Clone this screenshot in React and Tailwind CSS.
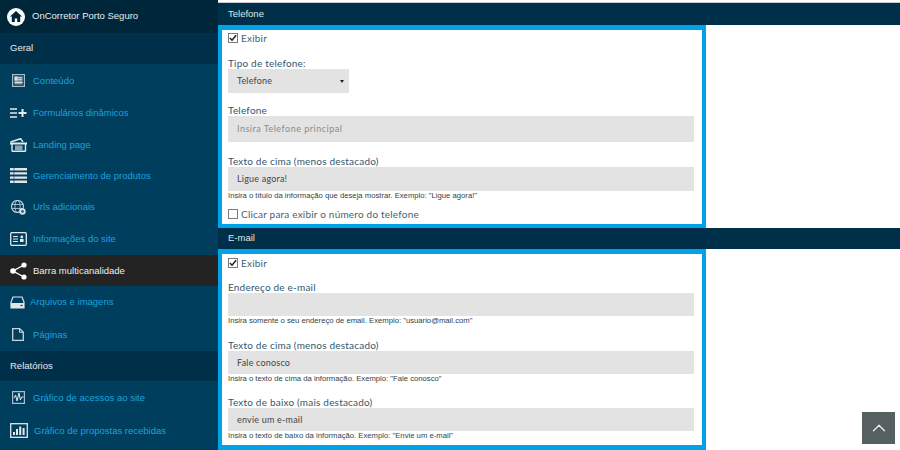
import { ChevronUp } from 'lucide-react';

const sans = "font-['Liberation_Sans',Arial,sans-serif]";

// Sidebar icons, drawn to match the panel's pale line style
function IconContent() {
  return (
    <svg width="13" height="13" viewBox="0 0 13 13" fill="none">
      <rect x="0.6" y="0.6" width="11.8" height="11.8" stroke="#a9bcc7" strokeWidth="1.2" />
      <rect x="2.5" y="2.5" width="8" height="8" fill="#7f9aaa" />
      <rect x="2.5" y="2.5" width="3" height="4" fill="#dbe3e8" />
      <path d="M6 3.5h4.5M6 5.5h4.5" stroke="#dbe3e8" strokeWidth="0.7" />
      <path d="M2.5 8.5h8" stroke="#dbe3e8" />
    </svg>
  );
}

function IconFormPlus() {
  return (
    <svg width="17" height="10" viewBox="0 0 17 10" fill="none">
      <path d="M0 1h7M0 5h7M0 9h7" stroke="#e3e9ec" strokeWidth="1.7" />
      <path d="M12.5 1v8M8.5 5h8" stroke="#e3e9ec" strokeWidth="2" />
    </svg>
  );
}

function IconLanding() {
  return (
    <svg width="17" height="14" viewBox="0 0 17 14" fill="none">
      <path d="M0.5 4l10-3.3 2.5 3" stroke="#e3e9ec" strokeWidth="1.5" />
      <path d="M0 4.5h17v2H0z" fill="#e3e9ec" />
      <path d="M2 6v7.4M15.5 6v7.4M2 13.3h13.5" stroke="#e3e9ec" strokeWidth="1.4" />
      <rect x="5" y="7.5" width="7.5" height="5" fill="#8ea5b2" />
    </svg>
  );
}

function IconList() {
  return (
    <svg width="17" height="15" viewBox="0 0 17 15">
      <path d="M0 0h17v2.4H0zM0 4.2h17v2.4H0zM0 8.4h17v2.4H0zM0 12.6h17V15H0z" fill="#dfe6ea" />
      <path d="M4 0v15" stroke="#003e5e" strokeWidth="0.6" />
    </svg>
  );
}

function IconGlobe() {
  return (
    <svg width="15" height="15" viewBox="0 0 15 15" fill="none">
      <circle cx="6.5" cy="6.5" r="6" stroke="#c3d0d8" strokeWidth="1.1" />
      <ellipse cx="6.5" cy="6.5" rx="2.6" ry="6" stroke="#c3d0d8" strokeWidth="0.8" />
      <path d="M0.5 4.5h12M0.5 8.5h12" stroke="#c3d0d8" strokeWidth="0.8" />
      <circle cx="11.5" cy="11.5" r="3.2" fill="#d7e0e5" />
      <circle cx="11.5" cy="11.5" r="1.4" fill="#1d6f99" />
    </svg>
  );
}

function IconInfoCard() {
  return (
    <svg width="17" height="14" viewBox="0 0 17 14" fill="none">
      <rect x="0.7" y="0.7" width="15.6" height="12.6" rx="1" stroke="#e3e9ec" strokeWidth="1.3" />
      <path d="M3 4.5h5M3 7h5M3 9.5h5" stroke="#e3e9ec" />
      <circle cx="11.8" cy="5" r="1.4" fill="#e3e9ec" />
      <path d="M10 7h3.6v3H10z" fill="#e3e9ec" />
    </svg>
  );
}

function IconShare() {
  return (
    <svg width="17" height="18" viewBox="0 0 17 18" fill="none">
      <path d="M14 3L3 9l11 6" stroke="#fff" strokeWidth="1.4" />
      <circle cx="14" cy="3" r="2.6" fill="#fff" />
      <circle cx="3" cy="9" r="2.8" fill="#fff" />
      <circle cx="14" cy="15" r="2.6" fill="#fff" />
    </svg>
  );
}

function IconDrive() {
  return (
    <svg width="15" height="13" viewBox="0 0 15 13" fill="none">
      <path d="M3 1h9l2 5v6H1V6z" stroke="#dfe6ea" strokeWidth="1.2" />
      <path d="M1 7h13v5H1z" fill="#dfe6ea" />
      <path d="M10.5 9.5h2" stroke="#003e5e" strokeWidth="1.2" />
    </svg>
  );
}

function IconPage() {
  return (
    <svg width="12" height="13" viewBox="0 0 12 13" fill="none">
      <path d="M0.7 0.7h7L11.3 4.2v8.1H0.7z" stroke="#c9d5dc" strokeWidth="1.3" />
      <path d="M7.5 0.7v3.6h3.8" stroke="#c9d5dc" />
    </svg>
  );
}

function IconPulse() {
  return (
    <svg width="13" height="13" viewBox="0 0 13 13" fill="none">
      <rect x="0.6" y="0.6" width="11.8" height="11.8" stroke="#aebfc9" strokeWidth="1.2" />
      <path d="M2 7l1.6-3 1.4 6 2-8 1.4 7 1.2-3H11.5" stroke="#e3e9ec" />
    </svg>
  );
}

function IconBars() {
  return (
    <svg width="18" height="15" viewBox="0 0 18 15" fill="none">
      <rect x="0.7" y="0.7" width="16.6" height="13.6" stroke="#dfe6ea" strokeWidth="1.3" />
      <path d="M3 9h2v3H3zM6 6h2v6H6zM9.2 3.5h2V12h-2zM12.6 5h2v7h-2z" fill="#e3e9ec" />
    </svg>
  );
}

function SectionLabel({ h, children }) {
  return <div className={`${h} pl-[10px] flex items-center bg-[#003049] text-[#e4eaee] text-[9.5px]`}>{children}</div>;
}

function NavItem({ icon, label, active, h, pad = 'pl-[10px]', w = 'w-[33px]' }) {
  return (
    <div className={`${h} flex items-center text-[9.5px] ${active ? 'bg-[#232323] text-[#eeeeee]' : 'text-[#1ba3dc]'}`}>
      <div className={`${w} ${pad} shrink-0 flex items-center`}>{icon}</div>
      <span className="whitespace-nowrap pt-[1px]">{label}</span>
    </div>
  );
}

function Sidebar() {
  return (
    <aside className={`w-[218px] shrink-0 h-full bg-[#003e5e] overflow-hidden ${sans}`}>
      <div className="h-[33px] bg-[#00263a] flex items-center pl-[7px] gap-[7px] text-[#e8edf0] text-[9.5px]">
        <div className="w-[18px] h-[18px] rounded-full bg-white flex items-center justify-center">
          <svg width="12" height="11" viewBox="0 0 12 11">
            <path d="M6 0L0 5.4h1.8V11h3V7.4h2.4V11h3V5.4H12z" fill="#00263a" />
          </svg>
        </div>
        <span>OnCorretor Porto Seguro</span>
      </div>
      <SectionLabel h="h-[31px]">Geral</SectionLabel>
      <NavItem icon={<IconContent />} label="Conteúdo" h="h-[33px]" pad="pl-[12px]" />
      <NavItem icon={<IconFormPlus />} label="Formulários dinâmicos" h="h-[32px]" />
      <NavItem icon={<IconLanding />} label="Landing page" h="h-[31px]" />
      <NavItem icon={<IconList />} label="Gerenciamento de produtos" h="h-[31px]" />
      <NavItem icon={<IconGlobe />} label="Urls adicionais" h="h-[32px]" pad="pl-[11px]" />
      <NavItem icon={<IconInfoCard />} label="Informações do site" h="h-[32px]" />
      <NavItem icon={<IconShare />} label="Barra multicanalidade" h="h-[31px]" active />
      <NavItem icon={<IconDrive />} label="Arquivos e imagens" h="h-[32px]" w="w-[30px]" />
      <NavItem icon={<IconPage />} label="Páginas" h="h-[33px]" pad="pl-[12px]" />
      <SectionLabel h="h-[30px]">Relatórios</SectionLabel>
      <NavItem icon={<IconPulse />} label="Gráfico de acessos ao site" h="h-[33px]" pad="pl-[12px]" />
      <NavItem icon={<IconBars />} label="Gráfico de propostas recebidas" h="h-[33px]" w="w-[34px]" />
    </aside>
  );
}

function Check({ checked, label }) {
  return (
    <label className="flex items-center gap-[3px] text-[10px] leading-none text-[#445f6e] tracking-[0.2px] font-['Lato',sans-serif]">
      <span className="w-[10px] h-[10px] border border-[#7b7b7b] bg-white flex items-center justify-center">
        {checked && (
          <svg width="9" height="8" viewBox="0 0 9 8" fill="none">
            <path d="M1 4l2.4 2.5L8 1" stroke="#10212c" strokeWidth="1.7" />
          </svg>
        )}
      </span>
      {label}
    </label>
  );
}

function Field({ label, value, placeholder, help, boxH = 'h-[23px]', className = '' }) {
  return (
    <div className={className}>
      <div className="pt-[1px] text-[10px] leading-[11px] text-[#34566a] tracking-[0.2px]">{label}</div>
      <div className={`${boxH} bg-[#e3e3e3] pl-[9px] flex items-center text-[9px]`}>
        {value && <span className="text-[#444444] tracking-[0.2px]">{value}</span>}
        {placeholder && <span className="text-[#8b8b8b] tracking-[0.5px]">{placeholder}</span>}
      </div>
      {help && <p className={`${sans} text-[7.7px] leading-[9px] text-[#2f3f49] whitespace-nowrap`}>{help}</p>}
    </div>
  );
}

function Band({ h, children }) {
  return <div className={`${h} bg-[#003049] text-[#dfe6ea] text-[9.5px] pl-[10px] flex items-center ${sans}`}>{children}</div>;
}

function PhoneBox() {
  return (
    <div className="w-[488px] h-[203px] border-[4px] border-t-[5px] border-b-[4px] border-[#00a2e8] pl-[6px] pr-[8px]">
      <div className="h-[16px] flex items-center">
        <Check checked label="Exibir" />
      </div>
      <div className="mt-[11px]">
        <div className="pt-[1px] text-[10px] leading-[11px] text-[#34566a] tracking-[0.2px]">Tipo de telefone:</div>
        <div className="w-[121px] h-[24px] bg-[#e3e3e3] pl-[9px] pr-[5px] flex items-center justify-between text-[9px] text-[#444444]">
          <span className="tracking-[0.2px]">Telefone</span>
          <span className="w-0 h-0 border-x-[2.5px] border-x-transparent border-t-[3px] border-t-[#222222]" />
        </div>
      </div>
      <Field label="Telefone" placeholder="Insira Telefone principal" boxH="h-[26px]" className="mt-[11px]" />
      <Field
        label="Texto de cima (menos destacado)"
        value="Ligue agora!"
        help={'Insira o título da informação que deseja mostrar. Exemplo: "Ligue agora!"'}
        boxH="h-[24px]"
        className="mt-[13px]"
      />
      <div className="mt-[9px]">
        <Check label="Clicar para exibir o número do telefone" />
      </div>
    </div>
  );
}

function EmailBox() {
  return (
    <div className="w-[488px] h-[201px] border-[4px] border-t-[5px] border-b-[5px] border-[#00a2e8] pl-[6px] pr-[8px]">
      <div className="h-[18px] flex items-center">
        <Check checked label="Exibir" />
      </div>
      <Field
        label="Endereço de e-mail"
        help={'Insira somente o seu endereço de email. Exemplo: "usuario@mail.com"'}
        className="mt-[9px]"
      />
      <Field
        label="Texto de cima (menos destacado)"
        value="Fale conosco"
        help={'Insira o texto de cima da informação. Exemplo: "Fale conosco"'}
        className="mt-[14px]"
      />
      <Field
        label="Texto de baixo (mais destacado)"
        value="envie um e-mail"
        help={'Insira o texto de baixo da informação. Exemplo: "Envie um e-mail"'}
        className="mt-[13px]"
      />
    </div>
  );
}

export default function App() {
  return (
    <div className="relative w-[900px] h-[450px] overflow-hidden flex bg-white font-['Lato',sans-serif]">
      <Sidebar />
      <main className="flex-1 min-w-0">
        <div className="h-[3px] border-b border-[#c8ccce]" />
        <Band h="h-[22px]">Telefone</Band>
        <PhoneBox />
        <Band h="h-[21px]">E-mail</Band>
        <EmailBox />
      </main>
      <button className="absolute left-[862px] top-[412px] w-[33px] h-[32px] bg-[#55605f] flex items-center justify-center text-[#e8ecec]">
        <ChevronUp size={22} strokeWidth={1.5} />
      </button>
    </div>
  );
}
